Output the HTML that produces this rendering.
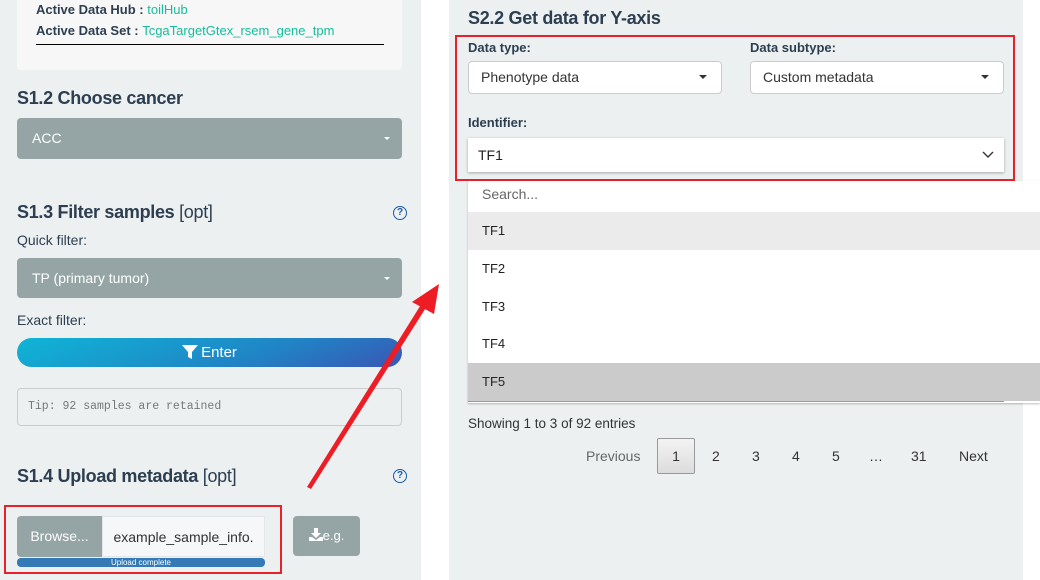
<!DOCTYPE html>
<html><head><meta charset="utf-8"><style>
*{box-sizing:border-box;margin:0;padding:0}
body{width:1040px;height:580px;overflow:hidden;background:#fff;font-family:"Liberation Sans",sans-serif;color:#2c3e50;position:relative}
.abs{position:absolute}
.lp{left:0;top:0;width:421px;height:580px;background:#ecf0f1}
.rp{left:449px;top:0;width:574px;height:580px;background:#ecf0f1}
h3{position:absolute;font-size:18px;font-weight:bold;color:#2c3e50;letter-spacing:-0.3px}
h3 span{font-weight:normal}
.sel{position:absolute;background:#95a5a6;border-radius:4px;color:#fff;font-size:14px;padding-left:15px;line-height:40px}
.caret{position:absolute;right:12px;top:19px;width:0;height:0;border-left:3px solid transparent;border-right:3px solid transparent;border-top:3px solid #fff}
.lbl{position:absolute;font-size:14px}
.q{position:absolute;width:14px;height:14px;border:1.6px solid #1a5aa8;border-radius:50%;color:#1a5aa8;font-size:10px;font-weight:bold;text-align:center;line-height:11px}
.wsel{position:absolute;background:#fff;border:1px solid #ccc;border-radius:4px;font-size:14px;padding-left:12px;line-height:30px;color:#333}
.wsel .c{position:absolute;right:14px;top:13px;border-left:4px solid transparent;border-right:4px solid transparent;border-top:4px solid #333}
.item{position:absolute;left:468px;width:572px;height:38px;font-size:13px;line-height:38px;padding-left:14px;color:#222}
.pg{position:absolute;top:448px;font-size:14px;color:#333}
</style></head><body>
<div class="abs lp"></div>
<div class="abs rp"></div>
<div class="abs" style="left:17px;top:0;width:385px;height:70px;background:#f7f7f7;border-radius:0 0 4px 4px"></div>
<div class="abs" style="left:36px;top:2px;font-size:13px;font-weight:bold">Active Data Hub : <span style="font-weight:normal;color:#18bc9c">toilHub</span></div>
<div class="abs" style="left:36px;top:23px;font-size:13px;font-weight:bold">Active Data Set : <span style="font-weight:normal;color:#18bc9c">TcgaTargetGtex_rsem_gene_tpm</span></div>
<div class="abs" style="left:36px;top:44px;width:348px;height:1px;background:#000"></div>

<h3 style="left:17px;top:88px">S1.2 Choose cancer</h3>
<div class="sel" style="left:17px;top:118px;width:385px;height:41px">ACC<div class="caret"></div></div>

<h3 style="left:17px;top:202px">S1.3 Filter samples <span>[opt]</span></h3>
<div class="q" style="left:393px;top:206px">?</div>
<div class="lbl" style="left:17px;top:232px">Quick filter:</div>
<div class="sel" style="left:17px;top:258px;width:385px;height:40px">TP (primary tumor)<div class="caret"></div></div>
<div class="lbl" style="left:17px;top:312px">Exact filter:</div>
<div class="abs" style="left:17px;top:338px;width:385px;height:29px;border-radius:15px;background:linear-gradient(160deg,#0fb5d6,#1f86c6 60%,#3a56b5);color:#fff;font-size:15px;text-align:center;line-height:29px"><svg width="16" height="14" viewBox="0 0 16 14" style="vertical-align:-2px;margin-right:3px"><path d="M0 0H16L10 7V14L6 12V7Z" fill="#fff"/></svg>Enter</div>
<div class="abs" style="left:17px;top:388px;width:385px;height:38px;border:1px solid #ccc;border-radius:4px;font-family:'Liberation Mono',monospace;font-size:11.5px;color:#777;line-height:36px;padding-left:10px">Tip: 92 samples are retained</div>

<h3 style="left:17px;top:466px">S1.4 Upload metadata <span>[opt]</span></h3>
<div class="q" style="left:393px;top:469px">?</div>
<div class="abs" style="left:4px;top:505px;width:278px;height:69px;border:2px solid #e8202a"></div>
<div class="abs" style="left:17px;top:516px;width:85px;height:41px;background:#95a5a6;color:#fff;font-size:14px;line-height:41px;text-align:center;border-radius:4px 0 0 4px">Browse...</div>
<div class="abs" style="left:102px;top:516px;width:163px;height:41px;background:#f5f7f8;border:1px solid #e2e6e8;font-size:14px;line-height:40px;text-align:center;color:#333">example_sample_info.</div>
<div class="abs" style="left:17px;top:558px;width:248px;height:9px;border-radius:4px;background:#337ab7;color:#fff;font-size:8px;line-height:9px;text-align:center">Upload complete</div>
<div class="abs" style="left:293px;top:516px;width:67px;height:40px;background:#95a5a6;border-radius:4px;color:#fff;font-size:13px;line-height:40px;text-align:center"><svg width="14" height="13" viewBox="0 0 14 13" style="vertical-align:-1px"><path d="M5 0H9V5H12L7 10L2 5H5Z M0 9H3L7 12L11 9H14V13H0Z" fill="#fff"/></svg>e.g.</div>

<h3 style="left:468px;top:8px">S2.2 Get data for Y-axis</h3>
<div class="abs" style="left:455px;top:35px;width:560px;height:146px;border:2px solid #e8202a"></div>
<div class="lbl" style="left:468px;top:40px;font-weight:bold;font-size:13px">Data type:</div>
<div class="lbl" style="left:750px;top:40px;font-weight:bold;font-size:13px">Data subtype:</div>
<div class="wsel" style="left:468px;top:61px;width:254px;height:33px">Phenotype data<div class="c"></div></div>
<div class="wsel" style="left:750px;top:61px;width:254px;height:33px">Custom metadata<div class="c"></div></div>
<div class="lbl" style="left:468px;top:115px;font-weight:bold;font-size:13px">Identifier:</div>
<div class="abs" style="left:468px;top:138px;width:536px;height:34px;background:#fff;box-shadow:0 1px 3px rgba(0,0,0,.3);font-size:14px;line-height:34px;padding-left:10px;color:#222">TF1<svg width="12" height="8" viewBox="0 0 12 8" style="position:absolute;right:10px;top:13px"><path d="M1 1L6 6L11 1" fill="none" stroke="#333" stroke-width="1.4"/></svg></div>
<div class="abs" style="left:468px;top:181px;width:572px;height:222px;background:#fff;box-shadow:0 1px 2px rgba(0,0,0,.25)"></div>
<div class="item" style="top:177px;color:#666;font-size:14px;height:34px;line-height:34px">Search...</div>
<div class="item" style="top:212px;background:#ebebeb">TF1</div>
<div class="item" style="top:250px">TF2</div>
<div class="item" style="top:288px">TF3</div>
<div class="item" style="top:325px">TF4</div>
<div class="item" style="top:363px;background:#cbcbcb">TF5</div>
<div class="abs" style="left:468px;top:401px;width:536px;height:1px;background:#999"></div>
<div class="abs" style="left:468px;top:416px;font-size:13.5px;color:#333">Showing 1 to 3 of 92 entries</div>
<div class="pg" style="left:586px;color:#666">Previous</div>
<div class="abs" style="left:657px;top:438px;width:38px;height:36px;border:1px solid #999;border-radius:2px;background:linear-gradient(#f3f3f3,#dcdcdc);font-size:14px;text-align:center;line-height:34px;color:#333">1</div>
<div class="pg" style="left:712px">2</div>
<div class="pg" style="left:752px">3</div>
<div class="pg" style="left:792px">4</div>
<div class="pg" style="left:832px">5</div>
<div class="pg" style="left:869px">…</div>
<div class="pg" style="left:911px">31</div>
<div class="pg" style="left:959px">Next</div>

<svg class="abs" style="left:0;top:0" width="1040" height="580">
<path d="M307 487L422 303L427 306L311 489Z" fill="#ee1c25"/>
<polygon points="439,284 412,302 434,314" fill="#ee1c25"/>
</svg>
</body></html>
